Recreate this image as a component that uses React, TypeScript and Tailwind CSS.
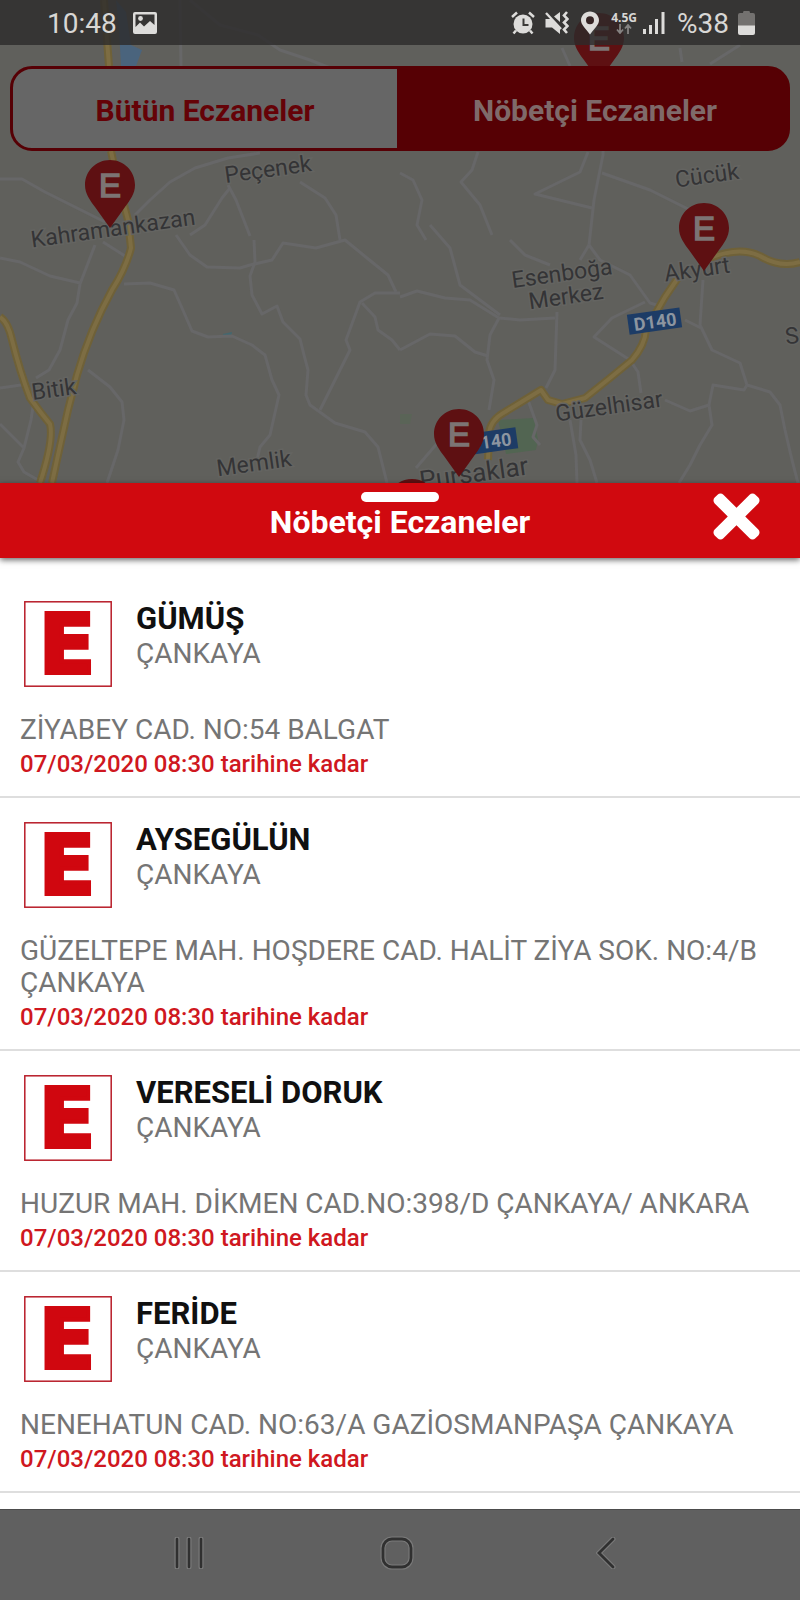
import { FaTimes } from "react-icons/fa";

type Pharmacy = { name: string; district: string; address: string };

const pharmacies: Pharmacy[] = [
  { name: "GÜMÜŞ", district: "ÇANKAYA", address: "ZİYABEY CAD. NO:54 BALGAT" },
  { name: "AYSEGÜLÜN", district: "ÇANKAYA", address: "GÜZELTEPE MAH. HOŞDERE CAD. HALİT ZİYA SOK. NO:4/B ÇANKAYA" },
  { name: "VERESELİ DORUK", district: "ÇANKAYA", address: "HUZUR MAH. DİKMEN CAD.NO:398/D ÇANKAYA/ ANKARA" },
  { name: "FERİDE", district: "ÇANKAYA", address: "NENEHATUN CAD. NO:63/A GAZİOSMANPAŞA ÇANKAYA" },
];

const minorRoads = [
  "M0 179 L22 179 L45 192 L75 207 L105 222",
  "M95 245 L80 284 L77 303 L68 320 L60 350 L49 370 L36 378",
  "M0 258 L20 262 L50 276 L80 283",
  "M103 242 L125 256",
  "M0 388 L28 384",
  "M0 424 L24 448 L31 420 L34 400",
  "M24 448 L18 462 L24 472 L38 480",
  "M88 370 L110 387 L122 402 L124 420 L118 450 L107 483",
  "M124 284 L150 283 L174 290 L182 308 L192 331 L208 337 L232 336 L252 345 L265 355 L272 380 L279 395 L270 435 L260 447 L257 460",
  "M135 215 L150 200 L170 182 L195 168 L228 158 L260 153",
  "M228 185 L236 200 L250 236",
  "M190 235 L205 225 L222 198 L230 188",
  "M176 235 L190 255 L207 267 L240 268 L250 265 L272 260 L283 243 L316 248 L345 240 L367 258 L388 275 L396 292",
  "M254 240 L255 262 L250 276 L252 295 L262 314 L277 306 L283 322 L300 339 L304 355 L308 370 L306 395 L310 405 L335 423 L365 432 L378 447 L387 483",
  "M400 293 L375 293 L360 302 L346 340 L350 350 L340 370 L320 410",
  "M362 303 L375 317 L378 330 L392 340 L400 350",
  "M300 182 L325 198 L336 215 L340 240",
  "M180 0 L181 67",
  "M190 0 L220 25 L258 35 L280 50 L310 60 L330 68",
  "M400 173 L413 180 L422 200 L417 225 L426 240",
  "M478 152 L472 170 L461 182 L480 205 L492 235",
  "M430 225 L450 248 L460 285 L500 315",
  "M400 297 L417 291 L445 298 L470 300 L499 318 L520 320 L555 318",
  "M499 318 L490 335 L487 360 L494 380 L489 410",
  "M400 350 L430 334 L455 336 L475 352 L488 356",
  "M605 60 L603 155 L594 200 L589 245",
  "M557 312 L555 370 L546 388",
  "M588 152 L580 172 L535 194 L592 208",
  "M602 173 L650 190 L690 210",
  "M510 240 L525 255 L550 265",
  "M589 245 L580 260 M589 245 L600 260 L630 275 L650 303 L660 306",
  "M645 302 L612 318 L594 337 L630 360 L638 372 L641 393",
  "M703 280 L700 325 L712 350 L740 363 L747 385 L744 390 L713 385 L709 405 L712 425 L700 445 L690 465 L679 483",
  "M685 320 L701 328",
  "M747 385 L770 392 L780 405 L785 430 L792 460 L798 483",
  "M665 400 L690 411 L709 405",
  "M528 400 L537 425 L533 437 L540 445",
  "M570 420 L576 455 L577 483 M581 420 L580 440 L590 460 L597 483",
  "M416 468 L440 440",
  "M562 48 L570 66 M680 48 L682 62 M740 45 L710 64",
];

const majorRoads = [
  "M104 0 L109 66 M111 151 L116 175 L128 220 L131 248 Q126 268 112 290 Q90 330 77 375 L68 410 L58 455 L52 483",
  "M0 317 Q8 322 12 340 Q20 372 30 398 Q40 412 50 424 Q54 440 40 483",
  "M488 460 L489 434 Q490 420 505 412 L541 390 L548 400 L562 404 L585 398 L610 378 L632 360 Q645 345 646 330 L665 297 L680 275",
  "M710 258 Q740 246 760 256 Q780 268 800 262",
];

const places: { label: string; x: number; y: number; size?: number }[] = [
  { label: "Peçenek", x: 269, y: 177 },
  { label: "Kahramankazan", x: 114, y: 236 },
  { label: "Cücük", x: 708, y: 183 },
  { label: "Akyurt", x: 698, y: 277 },
  { label: "Esenboğa", x: 563, y: 281 },
  { label: "Merkez", x: 567, y: 304 },
  { label: "Bitik", x: 55, y: 397 },
  { label: "Güzelhisar", x: 610, y: 414 },
  { label: "Memlik", x: 255, y: 471 },
  { label: "Pursaklar", x: 475, y: 482, size: 26 },
  { label: "Sarayköy", x: 832, y: 338 },
];

const pinShape = "M0 -68 C-14 -68 -25 -57 -25 -43 C-25 -34 -20 -28 -15 -21 L0 0 L15 -21 C20 -28 25 -34 25 -43 C25 -57 14 -68 0 -68Z";

function Pin({ x, y }: { x: number; y: number }) {
  return (
    <g transform={`translate(${x} ${y})`}>
      <path d={pinShape} fill="#5e1012" />
      <text y="-31" textAnchor="middle" fontSize="33" stroke="#7c7474" strokeWidth="1.500" fontFamily="Liberation Sans, sans-serif" fill="#7c7474">E</text>
    </g>
  );
}

function MapCanvas() {
  return (
    <svg viewBox="0 0 800 483" preserveAspectRatio="xMidYMin slice" className="absolute inset-0 h-full w-full" role="img" aria-label="Harita">
      <rect width="800" height="483" fill="#60605c" />
      <path d="M116 0 L126 12 L131 45 L142 50 L136 66 L121 66 L119 30Z" fill="#4a647d" />
      <path d="M498 420 L534 418 L538 440 L536 450 L506 454Z" fill="#526552" />
      <path d="M400 414 L412 414 L410 424 L400 424Z" fill="#5a6457" />
      <path d="M223 334 L232 332 L231 337 L223 337Z" fill="#43676f" />
      <g fill="none" stroke="#676768" strokeWidth="3" strokeLinejoin="round">
        {minorRoads.map((d) => <path key={d} d={d} />)}
      </g>
      <g fill="none" strokeLinejoin="round">
        {majorRoads.map((d) => <path key={d} d={d} stroke="#6f6138" strokeWidth="8" />)}
        {majorRoads.map((d) => <path key={d} d={d} stroke="#7d6d43" strokeWidth="4" />)}
      </g>
      <g fontFamily="Roboto, sans-serif" fontWeight="700" fontSize="18" fill="#8c95a0" textAnchor="middle">
        <g transform="translate(655 321) rotate(-8)">
          <rect x="-27" y="-10" width="53" height="20" fill="#1d3c66" />
          <text y="7">D140</text>
        </g>
        <g transform="translate(490 441) rotate(-8)">
          <rect x="-27" y="-10" width="54" height="21" fill="#1d3c66" />
          <text y="7">D140</text>
        </g>
      </g>
      <g fontFamily="Roboto, sans-serif" fill="#343436" stroke="#646461" strokeWidth="3" paintOrder="stroke" textAnchor="middle">
        {places.map((p) => (
          <text key={p.label} fontSize={p.size ?? 23} transform={`translate(${p.x} ${p.y}) rotate(-8)`}>{p.label}</text>
        ))}
      </g>
      <Pin x={110} y={228} />
      <Pin x={704} y={271} />
      <Pin x={459} y={477} />
      <Pin x={599} y={81} />
      <path d={pinShape} transform="translate(412 547)" fill="#5e1012" />
    </svg>
  );
}

function StatusBar() {
  return (
    <div className="relative flex h-[45px] items-center bg-[#2c2b2a]/80 pr-[45px] pl-[47px] text-[28px] leading-8 text-[#d8d7d5]">
      <span className="pt-[2px]">10:48</span>
      <svg viewBox="0 0 24 22" className="ml-4 h-[22px] w-6" aria-hidden="true">
        <path fillRule="evenodd" fill="#dddcda" d="M2 0H22Q24 0 24 2V20Q24 22 22 22H2Q0 22 0 20V2Q0 0 2 0ZM2.500 2.500V15L7 10.500L11 14.500L17 9L21.500 13V2.500Z" />
        <circle cx="7.500" cy="6.500" r="2.400" fill="#dddcda" />
      </svg>
      <div className="ml-auto flex items-center">
        <svg viewBox="0 0 24 24" className="mr-[10px] h-6 w-6" aria-hidden="true">
          <circle cx="12" cy="13" r="9.500" fill="#dddcda" />
          <path d="M12.500 7.500V14H17.500" fill="none" stroke="#3b3a38" strokeWidth="2" />
          <path d="M1 6 L6 1.500 M18 1.500 L23 6 M5 19.500 L2.500 22.500 M19 19.500 L21.500 22.500" stroke="#dddcda" strokeWidth="2.500" />
        </svg>
        <svg viewBox="0 0 24 24" className="mr-3 h-6 w-6" aria-hidden="true">
          <path d="M0.500 8H6L15 17V23L7 16.500H0.500Z M9 5.500L15 1V11Z" fill="#dddcda" />
          <path d="M1 2L16 18" stroke="#dddcda" strokeWidth="2.400" />
          <path d="M22 1L19 4.500L22.500 8L19 11.500L22.500 15L19 18.500L22 22" fill="none" stroke="#dddcda" strokeWidth="2.600" />
        </svg>
        <svg viewBox="0 0 18 24" className="mr-3 h-6 w-[18px]" aria-hidden="true">
          <path fillRule="evenodd" fill="#dddcda" d="M9 0.500C4 0.500 0 4.500 0 9.300C0 14 5 18 9 23.500C13 18 18 14 18 9.300C18 4.500 14 0.500 9 0.500ZM9 5.200A4 4 0 1 1 9 13.200A4 4 0 1 1 9 5.200Z" />
        </svg>
        <div className="mr-[6px] flex flex-col items-center">
          <span className="font-['Open_Sans',sans-serif] text-[12px] leading-[13px] font-bold">4.5G</span>
          <svg viewBox="0 0 16 10" className="h-[10px] w-4" aria-hidden="true">
            <path d="M4 0V8.500M1 5.500L4 9L7 5.500 M12 10V1.500M9 4.500L12 1L15 4.500" fill="none" stroke="#858382" strokeWidth="1.800" />
          </svg>
        </div>
        <svg viewBox="0 0 22 22" className="mr-3 h-[22px] w-[22px]" aria-hidden="true">
          <path d="M1.500 17V22M7.500 13V22M13.500 7V22M20 0V22" stroke="#dddcda" strokeWidth="3" />
        </svg>
        <span className="pt-[2px]">%38</span>
        <svg viewBox="0 0 17 24" className="ml-[9px] h-6 w-[17px]" aria-hidden="true">
          <path d="M6 0H11Q12 0 12 2H15Q17 2 17 4V15H0V4Q0 2 2 2H5Q5 0 6 0Z" fill="#73716f" />
          <path d="M0 14.500H17V22Q17 24 15 24H2Q0 24 0 22Z" fill="#dddcda" />
        </svg>
      </div>
    </div>
  );
}

function Logo() {
  return (
    <svg viewBox="0 0 88 86" className="h-[86px] w-[88px] shrink-0" aria-hidden="true">
      <rect x="0.800" y="0.800" width="86.400" height="84.400" fill="#fff" stroke="#b81d28" strokeWidth="1.500" />
      <text x="43" y="72" textAnchor="middle" fontSize="82" fontWeight="700" fontFamily="DejaVu Sans, sans-serif" fill="#d0070f" stroke="#d0070f" strokeWidth="4">E</text>
    </svg>
  );
}

function Row({ pharmacy }: { pharmacy: Pharmacy }) {
  return (
    <li className="border-b-2 border-[#dedede] px-5 pt-6 pb-4">
      <div className="flex pl-1">
        <Logo />
        <div className="ml-6">
          <h2 className="text-[31px] leading-9 font-bold text-[#101010]">{pharmacy.name}</h2>
          <p className="text-[28px] leading-[34px] text-[#757575]">{pharmacy.district}</p>
        </div>
      </div>
      <p className="mt-[27px] text-[28px] leading-8 text-[#757575]">{pharmacy.address}</p>
      <p className="mt-[2px] text-[24px] leading-8 font-medium text-[#cf1720]">07/03/2020 08:30 tarihine kadar</p>
    </li>
  );
}

export default function App() {
  return (
    <div className="flex min-h-screen flex-col bg-white font-['Roboto',sans-serif]">
      <header className="relative h-[483px] overflow-hidden">
        <MapCanvas />
        <StatusBar />
        <div className="relative mx-[10px] mt-[21px] flex h-[85px] text-[30px] font-bold">
          <button type="button" className="flex-1 rounded-l-[22px] border-[3px] border-[#560005] bg-[#666666] pt-[3px] text-[#650207]">Bütün Eczaneler</button>
          <button type="button" aria-pressed="true" className="flex-1 rounded-r-[22px] border-[3px] border-[#560004] bg-[#560004] pt-[3px] text-[#7f6a6a]">Nöbetçi Eczaneler</button>
        </div>
      </header>
      <main className="flex-1">
        <div className="relative flex h-[75px] flex-col items-center bg-[#d0090f] pt-[9px] shadow-[0_2px_6px_rgba(0,0,0,0.6)]">
          <div className="h-[10px] w-[78px] rounded-full bg-white" />
          <h1 className="mt-[2px] text-[32px] leading-9 font-bold text-white">Nöbetçi Eczaneler</h1>
          <button type="button" aria-label="Kapat" className="absolute top-0 right-10 flex h-[67px] w-[47px] items-center justify-center text-white">
            <FaTimes className="h-[67px] w-[47px]" />
          </button>
        </div>
        <ul className="pt-[19px]">
          {pharmacies.map((p) => <Row key={p.name} pharmacy={p} />)}
        </ul>
      </main>
      <nav className="grid h-[91px] grid-cols-3 items-center border-t border-[#4c4c4c] bg-[#606060] pr-[90px] pb-1 pl-[85px]">
        <button type="button" aria-label="Son uygulamalar" className="flex justify-center">
          <svg viewBox="0 0 30 32" className="h-8 w-[30px]"><path d="M3 2V30M15 2V30M27 2V30" stroke="#7a7a7a" strokeWidth="5" strokeLinecap="round" /><path d="M3 2V30M15 2V30M27 2V30" stroke="#303030" strokeWidth="2.600" strokeLinecap="round" /></svg>
        </button>
        <button type="button" aria-label="Ana ekran" className="flex justify-center">
          <svg viewBox="0 0 34 34" className="h-[34px] w-[34px]" fill="none"><rect x="3" y="3" width="28" height="28" rx="9" stroke="#7a7a7a" strokeWidth="5" /><rect x="3" y="3" width="28" height="28" rx="9" stroke="#303030" strokeWidth="2.800" /></svg>
        </button>
        <button type="button" aria-label="Geri" className="flex justify-center">
          <svg viewBox="0 0 20 32" className="h-8 w-5" fill="none"><path d="M17 2L3 16L17 30" stroke="#7a7a7a" strokeWidth="5" strokeLinecap="round" /><path d="M17 2L3 16L17 30" stroke="#303030" strokeWidth="2.800" strokeLinecap="round" /></svg>
        </button>
      </nav>
    </div>
  );
}
